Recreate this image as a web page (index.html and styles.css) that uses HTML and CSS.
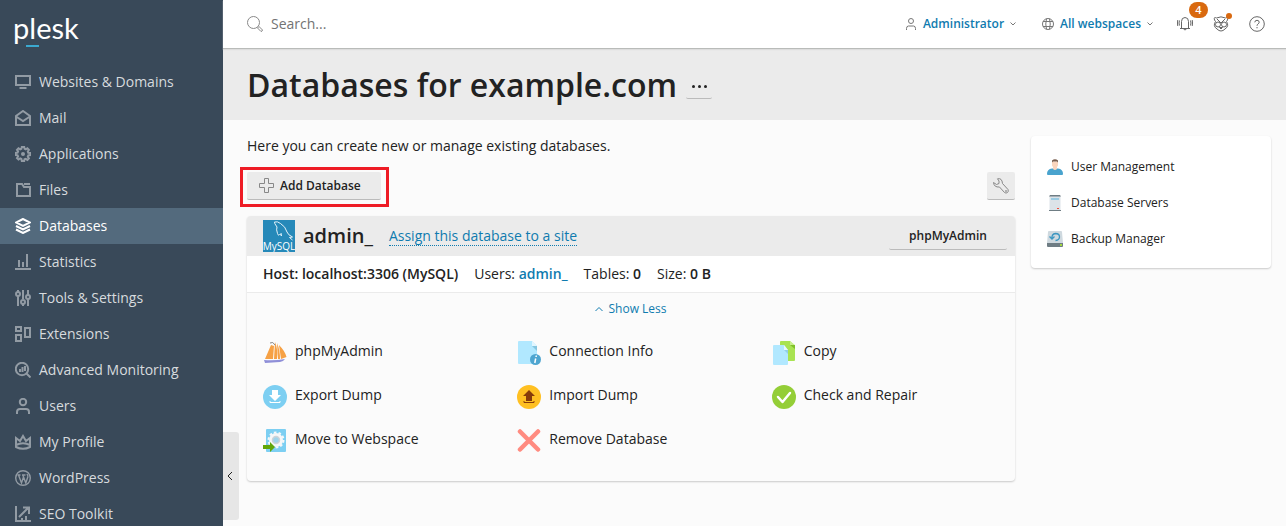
FILE: index.html
```html
<!DOCTYPE html>
<html lang="en">
<head>
<meta charset="utf-8">
<title>Databases for example.com</title>
<link rel="stylesheet" href="styles.css">
</head>
<body>
<div class="app">
  <aside class="sidebar">
    <a class="logo" href="#"><span>p<span class="logo-mark">l</span>esk</span></a>
    <nav class="nav">
      <a class="nav-item" href="#"><svg class="ico" viewBox="0 0 16 16"><path d="M1 2h14v9H1zM4.500 14h7"/></svg>Websites &amp; Domains</a>
      <a class="nav-item" href="#"><svg class="ico" viewBox="0 0 16 16"><path d="M1 6v9h14V6L8 1zM1 6.500l7 4.500 7-4.500"/></svg>Mail</a>
      <a class="nav-item" href="#"><svg class="ico" viewBox="0 0 16 16"><path d="M6.800 1h2.400l.4 1.900 1.200.5 1.600-1.100 1.500 1.500-1.100 1.700.5 1.200 2.200.2v2.200l-2.200.4-.5 1.200 1.100 1.700-1.500 1.500-1.700-1.100-1.200.5L9.200 15H6.800l-.4-2-1.200-.5-1.700 1.100L2 12.200l1.100-1.700-.5-1.200L.800 9V6.900l1.800-.3.5-1.200L2 3.800l1.500-1.500 1.700 1.100 1.200-.5z"/><circle class="solid" cx="8" cy="8" r="2"/></svg>Applications</a>
      <a class="nav-item" href="#"><svg class="ico" viewBox="0 0 16 16"><path d="M2 2h5l2 3h6v9H2zM9 2h6"/></svg>Files</a>
      <a class="nav-item active" href="#"><svg class="ico" viewBox="0 0 16 16"><path d="M8 1 1 4.500 8 8l7-3.500zM1 8l7 3.500L15 8M1 11.500 8 15l7-3.500"/></svg>Databases</a>
      <a class="nav-item" href="#"><svg class="ico" viewBox="0 0 16 16"><path d="M0 15h16M4 6v7M8 8v5M12 0v13"/></svg>Statistics</a>
      <a class="nav-item" href="#"><svg class="ico" viewBox="0 0 16 16"><path d="M3 0v2M3 6v10M8 0v9M8 14v2M13 0v5M13 9v7"/><circle cx="3" cy="4" r="2"/><circle cx="8" cy="12" r="2"/><circle cx="13" cy="7" r="2"/></svg>Tools &amp; Settings</a>
      <a class="nav-item" href="#"><svg class="ico" viewBox="0 0 16 16"><path d="M1 1h5v4H1zM1 9h5v6H1zM10 2h5v9h-5z"/></svg>Extensions</a>
      <a class="nav-item" href="#"><svg class="ico" viewBox="0 0 16 16"><circle cx="7" cy="7" r="6.200"/><path d="m11.500 11.500 4 4M5 7v3M7.500 5v5M10 4v5"/></svg>Advanced Monitoring</a>
      <a class="nav-item" href="#"><svg class="ico" viewBox="0 0 16 16"><circle cx="8" cy="4" r="3.200"/><path d="M2 16v-2q0-3 3-3h6q3 0 3 3v2"/></svg>Users</a>
      <a class="nav-item" href="#"><svg class="ico" viewBox="0 0 16 16"><path d="M1 4v9q7 3.500 14 0V4l-4 3-3-5-3 5zM1 11q7-3.500 14 0"/></svg>My Profile</a>
      <a class="nav-item" href="#"><svg class="ico thin" viewBox="0 0 16 16"><circle cx="8" cy="8" r="7.300"/><path d="M2.500 5h3M7 5h3.500M3.500 5 6.500 13 8.500 7M7.800 5l3 8 2-6q.4-2-1-3"/></svg>WordPress</a>
      <a class="nav-item" href="#"><svg class="ico" viewBox="0 0 16 16"><path d="M1 0v15h15M4 11l9-9M8 1.500h6V8M7 12v3M11 10v5"/></svg>SEO Toolkit</a>
    </nav>
  </aside>
  <div class="page">
    <button class="collapse" type="button" aria-label="Collapse sidebar"><svg viewBox="0 0 6 10"><path d="M5 1 1 5l4 4"/></svg></button>
    <header class="topbar">
      <label class="search">
        <svg viewBox="0 0 16 16"><circle cx="6.500" cy="6.500" r="6"/><path d="m10.500 12 1.500-1.500 3.500 3.500q-.3 1.500-1.500 1.500z"/></svg>
        <input type="search" placeholder="Search..." aria-label="Search">
      </label>
      <a class="menu" href="#"><svg viewBox="0 0 12 12"><circle cx="6" cy="3" r="2.500"/><path d="M1.500 12v-1.500q0-2.500 2-2.500h5q2 0 2 2.500V12"/></svg>Administrator<svg class="caret" viewBox="0 0 6 4"><path d="m.5.500 2.500 2.500L5.500.500"/></svg></a>
      <a class="menu" href="#"><svg viewBox="0 0 12 12"><circle cx="6" cy="6" r="5.500"/><path d="M1 3.500h10M1 8.500h10M4.500.800q-1.500 5.200 0 10.400M7.500.800q1.500 5.200 0 10.400"/></svg>All webspaces<svg class="caret" viewBox="0 0 6 4"><path d="m.5.500 2.500 2.500L5.500.500"/></svg></a>
      <button class="tool" type="button" aria-label="Notifications"><svg viewBox="0 0 16 16"><path d="M3 12.500h10M4.500 12.500V5.500q0-4 3.500-4t3.500 4v7M6.500 13q1.500 2 3 0M2.500 4.500q-1 2.500 0 5M13.500 4.500q1 2.500 0 5M.800 4q-.8 3 0 6M15.200 4q.8 3 0 6"/></svg><span class="badge">4</span></button>
      <button class="tool" type="button" aria-label="Feedback"><svg viewBox="0 0 16 16"><path d="M3.500 2Q.500.500 1.500 4L2.500 5.500Q-.500 10 4 13q4 4 8 0 4.500-3 1.500-7.500l1-1.500Q15.500.500 12.500 2 8-.300 3.500 2zM4 3l4 4 4-4M6.500 11.500h3L8 13z"/><circle cx="5" cy="8.500" r="2.500"/><circle cx="11" cy="8.500" r="2.500"/></svg><span class="dot"></span></button>
      <button class="tool" type="button" aria-label="Help"><svg viewBox="0 0 16 16"><circle cx="8" cy="8" r="7.300"/><path d="M5.800 6.300Q5.900 4.300 8 4.300T10.200 6.200Q10.200 7.200 9 8 8 8.600 8 9.800M8 11v1.300"/></svg></button>
    </header>
    <div class="title-band">
      <h1>Databases for example.com</h1>
      <button class="more" type="button" aria-label="More"><svg viewBox="0 0 15 3"><circle cx="1.500" cy="1.500" r="1.500"/><circle cx="7.500" cy="1.500" r="1.500"/><circle cx="13.500" cy="1.500" r="1.500"/></svg></button>
    </div>
    <div class="content">
      <main class="main">
        <p class="intro">Here you can create new or manage existing databases.</p>
        <div class="toolbar">
          <button class="add" type="button"><svg viewBox="0 0 15 15"><path d="M5.500.500h4v5h5v4h-5v5h-4v-5h-5v-4h5z"/></svg>Add Database</button>
          <button class="wrench" type="button" aria-label="Settings"><svg viewBox="0 0 16 16"><path d="M4.500.800Q9-.3 9.500 5.500L15 11.500q.8 2-.5 3-1.500 1.200-3 0L6.500 9Q1 9.500.500 4.500L3.500 6.500 6 5.500V3z"/><circle cx="13" cy="13" r=".5"/></svg></button>
        </div>
        <section class="panel">
          <div class="panel-head">
            <svg class="mysql" viewBox="0 0 32 32"><rect width="32" height="32" fill="#2689b9"/><path d="M18.500 16q-1-2.500-2-1.500-1 2-2-1-1.500-4-.5-6.500-3-4-2.500-5 3-1 6 1.500 5 3 6.500 8.500 1 3 5.500 5l-3 .5 3 2.500M18.500 16l-.5-3" fill="none" stroke="#e5f3fa"/><text x="16" y="30" text-anchor="middle">MySQL</text></svg>
            <h2>admin_</h2>
            <a class="assign" href="#">Assign this database to a site</a>
            <button class="pma" type="button">phpMyAdmin</button>
          </div>
          <div class="facts">
            <b>Host: localhost:3306 (MySQL)</b>
            <span>Users: <a href="#">admin_</a></span>
            <span>Tables: <b>0</b></span>
            <span>Size: <b>0 B</b></span>
          </div>
          <div class="details">
            <button class="less" type="button"><svg viewBox="0 0 8 6"><path d="m.5 5 3.500-3.500L7.500 5"/></svg>Show Less</button>
            <div class="actions">
              <a href="#"><svg viewBox="0 0 24 24"><path d="M2 18 8 4l3 1-1 13zM12 1q3 7 2 17h-3zM14 2q3 7 3 16h-2zM16 4q6 6 7.500 12L18 18z" fill="#f6a145"/><path d="M7 2q3-2 5 2" stroke="#888" fill="none"/><path d="M1 19q10 1 21-1-2 3-5 3l-15 1z" fill="#8f8fd8"/></svg>phpMyAdmin</a>
              <a href="#"><svg viewBox="0 0 24 24"><path d="M2 0h13l5 5v18H2q-1 0-1-1V1q0-1 1-1z" fill="#b1e8ff"/><path d="M15 5h5v5z" fill="#85c5df"/><path d="M15 0v5h5z" fill="#e1f6ff"/><circle cx="18.500" cy="18.500" r="5.500" fill="#4ea5d0"/><path d="M18.700 17.500 17.800 22M19.300 14.500l-.2 1.500" stroke="#fff" stroke-width="1.500"/></svg>Connection Info</a>
              <a href="#"><svg viewBox="0 0 24 24"><path d="M9 0h9l5 5v14q0 1-1 1H8V1q0-1 1-1z" fill="#a9e352"/><path d="M18 0v4h5z" fill="#c9ef8e"/><path d="M18 4h5v4z" fill="#7fc029"/><path d="M2 4h10l4 5v14q0 1-1 1H2q-1 0-1-1V5q0-1 1-1z" fill="#b1e8ff"/><path d="M12 4v5h4z" fill="#e8f8ff"/><path d="M12 9h4v4z" fill="#91cfe9"/></svg>Copy</a>
              <a href="#"><svg viewBox="0 0 24 24"><circle cx="12" cy="12" r="12" fill="#7dcff2"/><path d="M9 5h6v5h3l-6 6-6-6h3z" fill="#fff"/><path d="M7 16v1.500h10V16" stroke="#fff" fill="none"/></svg>Export Dump</a>
              <a href="#"><svg viewBox="0 0 24 24"><circle cx="12" cy="12" r="12" fill="#ffc022"/><path d="m12 5 6 6h-3v5H9v-5H6z" fill="#863b0b"/><path d="M7 16v1.500h10V16" stroke="#863b0b" fill="none"/></svg>Import Dump</a>
              <a href="#"><svg viewBox="0 0 24 24"><circle cx="12" cy="12" r="12" fill="#94ce37"/><path d="m6 12 4.500 5L18 8" stroke="#fff" stroke-width="2.500" stroke-linecap="round" stroke-linejoin="round" fill="none"/></svg>Check and Repair</a>
              <a href="#"><svg viewBox="0 0 24 24"><rect x="3" width="20" height="23" rx="1" fill="#7dcff2"/><circle cx="13" cy="11" r="7" fill="#f6f7f8"/><circle cx="13" cy="11" r="7.500" fill="none" stroke="#f6f7f8" stroke-width="2" stroke-dasharray="2.600 2.110"/><circle cx="13" cy="11" r="3.500" fill="#9fd3ea" stroke="#cdd3d8" stroke-width="1.500"/><path d="M0 16h7v-3l5 5-5 5v-3H0z" fill="#62a60a"/></svg>Move to Webspace</a>
              <a href="#"><svg viewBox="0 0 24 24"><path d="m3 2.500 18 18M21 2.500l-18 18" stroke="#ff8b80" stroke-width="4.500" stroke-linecap="round"/></svg>Remove Database</a>
            </div>
          </div>
        </section>
      </main>
      <aside class="links">
        <a href="#"><svg viewBox="0 0 16 16"><path d="M0 15q0-5 5-5.500h6q5 .5 5 5.500 0 1-1 1H1q-1 0-1-1z" fill="#49a3ce"/><path d="M5 2.500h6v4L10 8v2q-2 2-4 0V8L5 6.500z" fill="#fbd5bd"/><path d="M5 3.500V1.500Q8-1 11 1.500v2l-1-1H6z" fill="#795d4d"/></svg>User Management</a>
        <a href="#"><svg viewBox="0 0 16 16"><path d="M2.500 1h11v14h-11z" fill="#dce3e8"/><path d="M3 0h10l1 1.500H2zM2 15h12v1H2z" fill="#6f7d84"/><path d="M4 3h8v2H4z" fill="#9acbe3"/><path d="M10 13h2v1h-2z" fill="#f0503c"/></svg>Database Servers</a>
        <a href="#"><svg viewBox="0 0 16 16"><path d="M1 1q0-1 1-1h12q1 0 1 1l1 11H0z" fill="#cfd9df"/><path d="M0 12h16v3q0 1-1 1H1q-1 0-1-1z" fill="#6f7d84"/><path d="M13 13h2v2h-2z" fill="#a3d840"/><path d="M2.500 5.500 5 8l2.500-2.500M5 7.500q-.5-4.500 3.500-5 4 0 4 3.500 0 3-4 3.500" fill="none" stroke="#3c96c1" stroke-width="1.300"/></svg>Backup Manager</a>
      </aside>
    </div>
  </div>
</div>
</body>
</html>
```
FILE: styles.css
```css
* { box-sizing: border-box; }
body { margin: 0; background: #fbfbfb; color: #222; font: 14px/20px "Open Sans", sans-serif; }
a { color: #0f7baf; text-decoration: none; }
button, input { font: inherit; color: inherit; border: 0; padding: 0; background: none; }
svg { flex: none; display: block; fill: none; }
h1, h2, p { margin: 0; }
b { font-weight: 600; }

.app { display: flex; height: 100vh; overflow: hidden; }

.sidebar { flex: none; width: 223px; background: #394959; overflow: hidden; }
.logo { display: flex; align-items: center; height: 64px; padding: 0 0 8px 13px; color: #fff; font: 400 29px/40px Lato, sans-serif; }
.logo-mark { position: relative; }
.logo-mark::after { content: ""; position: absolute; left: -3px; bottom: -2px; width: 13px; height: 2px; background: #3ba9d0; }
.nav-item { display: flex; align-items: center; gap: 8px; height: 36px; padding-left: 15px; color: #d7dbde; font-weight: 500; }
.ico { width: 16px; height: 16px; stroke: #929ba4; stroke-width: 2; }
.ico.thin { stroke-width: 1.400; }
.ico .solid { fill: #929ba4; stroke: none; }
.nav-item.active { background: #536a7d; color: #fff; }
.active .ico { stroke: #fff; }

.page { position: relative; flex: 1; min-width: 0; }
.collapse { position: absolute; left: 0; bottom: 6px; width: 16px; height: 88px; display: grid; place-items: center; padding-right: 2px; background: #e6e6e6; border-radius: 0 3px 3px 0; }
.collapse svg { width: 6px; height: 10px; stroke: #222; }

.topbar { display: flex; align-items: center; height: 49px; padding: 0 21px 0 24px; background: #fff; border-bottom: 1px solid #b9bbb9; box-shadow: 0 1px 1px #ddd; position: relative; }
.search { display: flex; align-items: center; gap: 8px; flex: 1; }
.search svg { width: 16px; height: 16px; stroke: #888; }
.search input { flex: 1; min-width: 0; outline: 0; }
.search input::placeholder { color: #737373; opacity: 1; }
.menu { display: flex; align-items: center; gap: 6px; margin-right: 26px; font-size: 12px; font-weight: 600; }
.menu + .tool { margin-left: -2px; }
.menu svg { width: 12px; height: 12px; stroke: #777; }
.menu .caret { width: 6px; height: 4px; }
.tool { position: relative; width: 16px; height: 16px; margin-right: 20px; }
.tool:last-child { margin-right: 0; }
.tool svg { width: 16px; height: 16px; stroke: #666; }
.badge { position: absolute; left: 12px; top: -14px; width: 19px; height: 16px; border-radius: 8px; background: #d9690f; color: #fff; font-size: 11px; line-height: 16px; font-weight: 600; text-align: center; }
.dot { position: absolute; right: -3px; top: -3px; width: 6px; height: 6px; border-radius: 50%; background: #d9690f; }

.title-band { display: flex; align-items: center; gap: 9px; height: 71px; padding: 0 24px; background: #ebebeb; }
h1 { font-size: 32px; line-height: 40px; font-weight: 600; }
.more { width: 26px; height: 24px; margin-top: 4px; display: grid; place-items: center; border-bottom: 1px solid #bbb; border-radius: 2px; }
.more svg { width: 15px; height: 3px; fill: #222; }

.content { display: flex; align-items: flex-start; gap: 16px; padding: 16px 15px 16px 24px; }
.main { flex: 1; min-width: 0; }
.toolbar { display: flex; justify-content: space-between; margin: 16px 0; }
.add { position: relative; display: flex; align-items: center; gap: 6px; height: 28px; padding: 0 20px 0 12px; background: #ebebeb; border-bottom: 1px solid #bbb; border-radius: 2px; font-size: 12px; font-weight: 600; }
.add::after { content: ""; position: absolute; inset: -5px -8px -8px -7px; border: 3px solid #ee1c25; }
.add svg { width: 15px; height: 15px; stroke: #888; }
.wrench { width: 28px; height: 28px; display: grid; place-items: center; background: #ebebeb; border-bottom: 1px solid #bbb; border-radius: 2px; }
.wrench svg { width: 16px; height: 16px; stroke: #888; }

.panel { border-radius: 4px; box-shadow: 0 1px 2px rgba(0, 0, 0, .2); overflow: hidden; }
.panel-head { display: flex; align-items: center; height: 40px; padding: 0 8px 0 16px; background: #ebebeb; }
.mysql { width: 32px; height: 32px; }
.mysql text { font: 500 10px "Open Sans", sans-serif; fill: #fff; }
h2 { margin: 0 16px 0 8px; font-size: 20px; line-height: 28px; font-weight: 600; }
.assign { border-bottom: 1px dotted; line-height: 18px; }
.pma { width: 118px; height: 28px; margin-left: auto; border-bottom: 1px solid #bbb; border-radius: 2px; font-size: 12px; font-weight: 600; }
.facts { display: flex; align-items: center; gap: 16px; height: 37px; padding: 0 16px; background: #fff; border-bottom: 1px solid #ebebeb; }
.facts a { font-weight: 600; }
.details { padding: 6px 16px 26px; }
.less { display: flex; align-items: center; gap: 5px; margin: 0 auto 20px; color: #0f7baf; font-size: 12px; }
.less svg { width: 8px; height: 6px; stroke: #0f7baf; }
.actions { display: grid; grid-template-columns: repeat(3, 1fr); gap: 16px 27px; }
.actions a { display: flex; align-items: flex-start; gap: 8px; height: 28px; padding-top: 2px; color: #222; }
.actions svg { width: 24px; height: 24px; }

.links { flex: none; width: 240px; padding: 13px 16px 11px; background: #fff; border-radius: 4px; box-shadow: 0 1px 2px rgba(0, 0, 0, .2); }
.links a { display: flex; align-items: center; gap: 8px; height: 36px; color: #222; font-size: 12px; }
.links svg { width: 16px; height: 16px; }
```
